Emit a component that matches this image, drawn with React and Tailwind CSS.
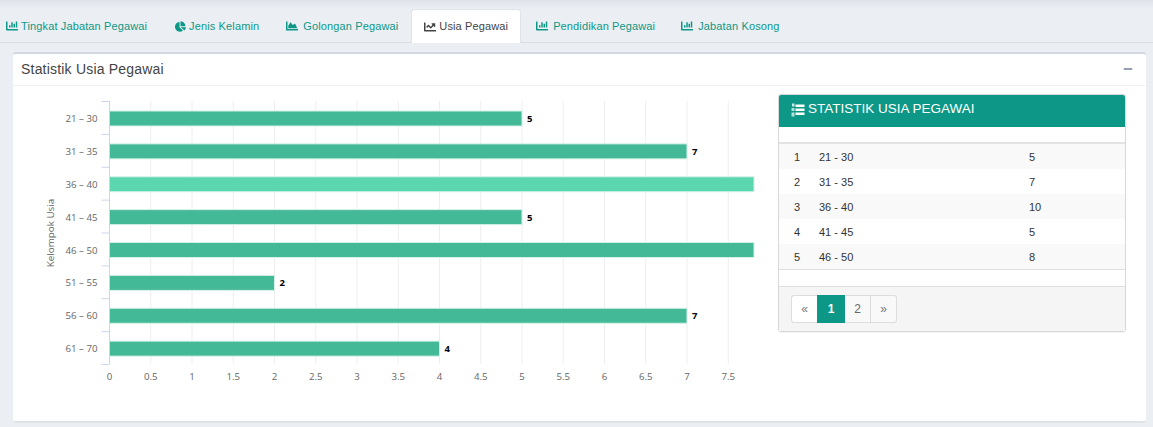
import React from "react";
import {
  FaChartArea,
  FaChartBar,
  FaChartLine,
  FaChartPie,
  FaMinus,
} from "react-icons/fa";

const tabs = [
  { label: "Tingkat Jabatan Pegawai", Icon: FaChartBar, cls: "gap-[3px] px-[13px]", iconCls: "text-[12px]" },
  { label: "Jenis Kelamin", Icon: FaChartPie, cls: "gap-[3px] pl-[13px] pr-[12px]", iconCls: "text-[11px]" },
  { label: "Golongan Pegawai", Icon: FaChartArea, cls: "gap-[5px] pl-[13px] pr-[11px]", iconCls: "text-[12px]" },
  { label: "Usia Pegawai", Icon: FaChartLine, active: true, iconCls: "text-[12px]" },
  { label: "Pendidikan Pegawai", Icon: FaChartBar, cls: "gap-[5px] pl-[13px] pr-[11px]", iconCls: "text-[12px]" },
  { label: "Jabatan Kosong", Icon: FaChartBar, cls: "gap-[5px] px-[13px]", iconCls: "text-[12px]" },
];

const bars = [
  { label: "21 - 30", value: 5 },
  { label: "31 - 35", value: 7 },
  { label: "36 - 40", value: 10, hover: true },
  { label: "41 - 45", value: 5 },
  { label: "46 - 50", value: 8 },
  { label: "51 - 55", value: 2 },
  { label: "56 - 60", value: 7 },
  { label: "61 - 70", value: 4 },
];

const rows = [
  [1, "21 - 30", 5],
  [2, "31 - 35", 7],
  [3, "36 - 40", 10],
  [4, "41 - 45", 5],
  [5, "46 - 50", 8],
];

const ticks = [0, 0.5, 1, 1.5, 2, 2.5, 3, 3.5, 4, 4.5, 5, 5.5, 6, 6.5, 7, 7.5];

function ListIcon() {
  return (
    <svg width="14" height="14" viewBox="0 0 14 14" fill="currentColor">
      <rect x="4.5" y="1.5" width="9" height="2.5" />
      <rect x="4.5" y="5.5" width="9" height="2.5" />
      <rect x="4.5" y="9.5" width="9" height="2.5" />
      <rect x="1" y="0.5" width="2.5" height="3" opacity="0.8" />
      <rect x="0.5" y="5" width="3" height="3" opacity="0.7" />
      <rect x="0.5" y="9.5" width="3" height="4" opacity="0.7" />
    </svg>
  );
}

function Chart() {
  const x0 = 96.5;
  const top = 15;
  const band = 32.875;
  const unit = 82.5;
  const maxW = 644.5;
  const bottom = top + band * 8;

  return (
    <svg width="745" height="310" className="block" style={{ fontFamily: '"Open Sans", sans-serif' }}>
      {ticks.slice(1).map((t) => (
        <line key={t} x1={x0 + t * unit} x2={x0 + t * unit} y1={top} y2={bottom} stroke="#eeeeee" />
      ))}
      {bars.map((b, i) => {
        const w = Math.min(b.value * unit, maxW);
        const y = top + band * i + 9.5;
        return (
          <g key={b.label}>
            <line x1={x0 - 8} x2={x0} y1={top + band * i + 0.5} y2={top + band * i + 0.5} stroke="#ccd6eb" />
            <rect
              x={x0}
              y={y + 0.5}
              width={w}
              height={15}
              fill={b.hover ? "#5cd6ae" : "#43b997"}
              stroke="#d5f2e8"
              strokeWidth="1"
            />
            <text x={x0 - 12} y={y + 11.5} textAnchor="end" fontSize="9.7" fill="#666666">
              {b.label.replace("-", "–")}
            </text>
            {w < maxW && (
              <text x={x0 + w + 5} y={y + 11.5} fontSize="9.5" fontWeight="700" fill="#000000">
                {b.value}
              </text>
            )}
          </g>
        );
      })}
      <line x1={x0 - 8} x2={x0} y1={bottom + 0.5} y2={bottom + 0.5} stroke="#ccd6eb" />
      <line x1={x0} x2={x0} y1={top} y2={bottom} stroke="#ccd6eb" />
      {ticks.map((t) => (
        <text key={t} x={x0 + t * unit} y={bottom + 16} textAnchor="middle" fontSize="9.7" fill="#666666">
          {t}
        </text>
      ))}
      <text
        transform="translate(40.5 147) rotate(-90)"
        textAnchor="middle"
        fontSize="9.8"
        fill="#666666"
      >
        Kelompok Usia
      </text>
    </svg>
  );
}

function Pagination() {
  return (
    <div className="flex h-[28px] text-[12px] text-[#777777]">
      <span className="flex w-[26px] items-center justify-center rounded-l-[3px] border border-r-0 border-[#dddddd] bg-white">
        «
      </span>
      <span className="flex w-[28px] items-center justify-center bg-[#0d9787] font-bold text-white">1</span>
      <span className="flex w-[26px] items-center justify-center border-y border-r border-[#dddddd] bg-[#f9f9f9] text-[#666666]">
        2
      </span>
      <span className="flex w-[26px] items-center justify-center rounded-r-[3px] border-y border-r border-[#dddddd] bg-[#f9f9f9]">
        »
      </span>
    </div>
  );
}

function StatTable() {
  return (
    <div className="w-[348px] overflow-hidden rounded-[3px] border border-[#d8d8d8] shadow-[0_1px_1px_rgba(0,0,0,0.05)]">
      <div className="flex h-[32px] items-center gap-[3px] bg-[#0d9787] pb-[3px] pl-[12px] text-[13.5px] text-white">
        <ListIcon />
        <span>STATISTIK USIA PEGAWAI</span>
      </div>
      <div className="h-[17px] border-b-2 border-[#e3e3e3] bg-white" />
      <table className="w-full table-fixed border-collapse text-[11px] text-[#333333]">
        <colgroup>
          <col className="w-[32px]" />
          <col className="w-[210px]" />
          <col />
        </colgroup>
        <tbody>
          {rows.map(([no, range, total]) => (
            <tr key={no} className="h-[25px] odd:bg-[#f9f9f9]">
              <td className="pl-[15px] pt-[1px]">{no}</td>
              <td className="pl-[8px] pt-[1px]">{range}</td>
              <td className="pl-[8px] pt-[1px]">{total}</td>
            </tr>
          ))}
        </tbody>
      </table>
      <div className="h-[18px] border-y border-[#e0e0e0] bg-white" />
      <div className="h-[44px] bg-[#f5f5f5] px-[12px] pt-[8px]">
        <Pagination />
      </div>
    </div>
  );
}

export default function App() {
  return (
    <div
      className="h-[427px] w-[1153px] overflow-hidden bg-[#ebeff4]"
      style={{ fontFamily: '"Liberation Sans", Arial, sans-serif' }}
    >
      <div className="h-[9px] bg-gradient-to-b from-[#dfe3e9] to-[#ebeff4]" />
      <nav className="flex h-[34px] gap-[2px] border-b border-[#d9dde2] -ml-[7px] text-[11px] tracking-[0.13px]">
        {tabs.map(({ label, Icon, active, cls, iconCls }) => (
          <div
            key={label}
            className={
              active
                ? "flex h-[34px] items-center gap-[3px] rounded-t-[3px] border border-b-0 border-[#e0e3e8] bg-white px-[12px] text-[#444444]"
                : `flex h-[34px] items-center text-[#0d9787] ${cls}`
            }
          >
            <Icon className={iconCls} />
            <span>{label}</span>
          </div>
        ))}
      </nav>
      <section className="ml-[13px] mt-[9px] h-[371px] w-[1133px] rounded-[3px] border-t-[2px] border-b-[2px] border-t-[#d2d6de] border-b-[#dfe2e6] bg-white">
        <header className="flex h-[32px] items-center justify-between border-b border-[#f2f2f2] pl-[8px] pr-[13px] text-[14px] text-[#444444]">
          <span className="tracking-[0.2px]">Statistik Usia Pegawai</span>
          <FaMinus className="-mt-[2px] text-[10px] text-[#97a0b3]" />
        </header>
        <div className="flex">
          <Chart />
          <div className="mt-[8px] ml-[20px]">
            <StatTable />
          </div>
        </div>
      </section>
    </div>
  );
}
